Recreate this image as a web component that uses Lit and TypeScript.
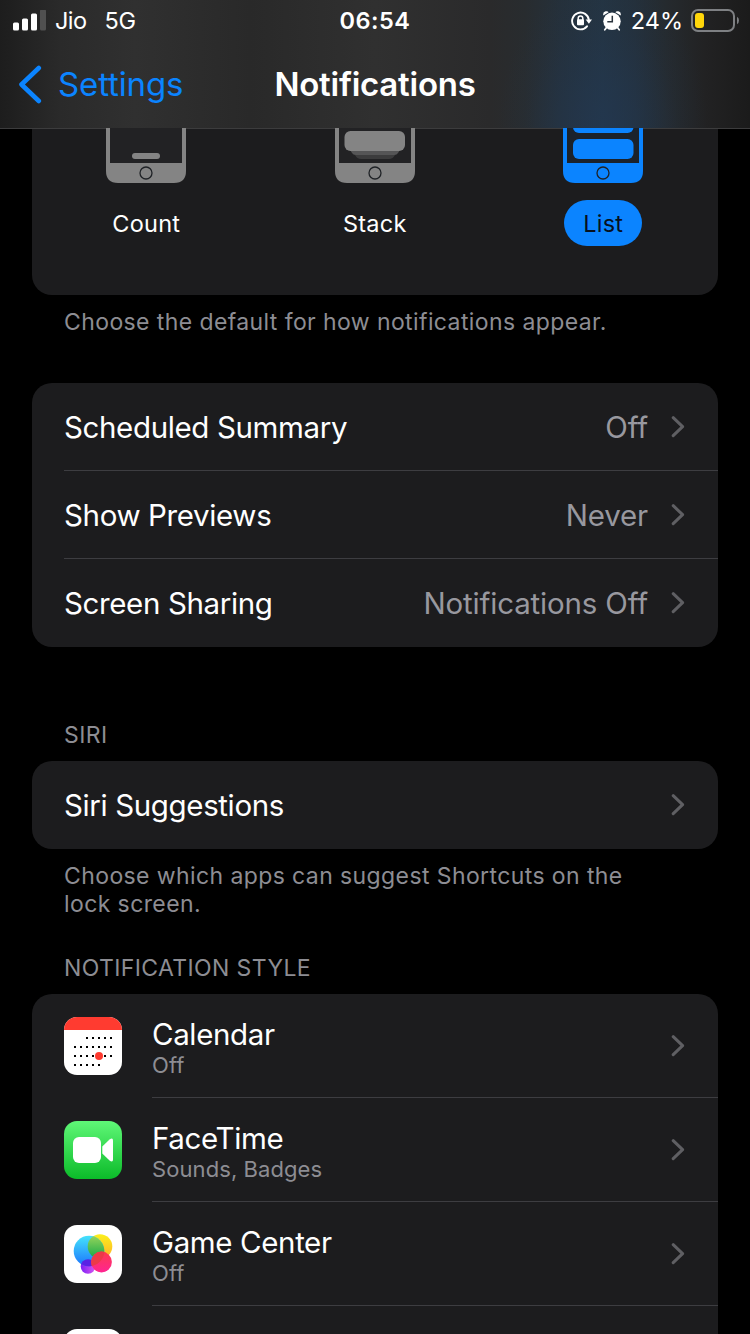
import { LitElement, html, css, svg, nothing } from "lit";
import { customElement, property } from "lit/decorators.js";

const chevron = html`<svg class="chev" width="14" height="22" viewBox="0 0 14 22">
  <path d="M2.200 1.700 L11.600 10.700 L2.200 19.700" fill="none" stroke="#5f5f63" stroke-width="3" stroke-linecap="round" stroke-linejoin="round" />
</svg>`;

const phoneContent = {
  count: svg`<rect x="26" y="25" width="28" height="6" rx="3" fill="#848484"/>`,
  stack: svg`
    <path d="M14 20H66L60 27Q58 31 54 31H26Q22 31 20 27Z" fill="#3c3c3d"/>
    <path d="M10 14H70L63 25Q62 27 59 27H21Q18 27 17 25Z" fill="#555556"/>
    <rect x="9.500" y="3" width="60.500" height="20" rx="6" fill="#848484"/>`,
  list: svg`
    <rect x="10" y="-15" width="60.500" height="20" rx="6" fill="#0b84ff"/>
    <rect x="10" y="11" width="60.500" height="20" rx="6" fill="#0b84ff"/>`,
};

type Kind = keyof typeof phoneContent;

@customElement("phone-option")
class PhoneOption extends LitElement {
  @property() kind: Kind = "count";
  @property() label = "";
  @property({ type: Boolean }) selected = false;

  static styles = css`
    :host { display: flex; flex-direction: column; align-items: center; width: 228.5px; flex: none; }
    svg { display: block; margin-top: -1px; }
    .label {
      margin-top: 17px; height: 46px; line-height: 47px; padding: 0 19px; border-radius: 23px;
      font-size: 23.5px; letter-spacing: 0.25px; color: #fff;
    }
    .on { background: #0b84ff; color: #06111e; }
  `;

  render() {
    const body = this.selected ? "#0b84ff" : "#848484";
    const screen = this.selected ? "#1b222b" : "#222224";
    return html`
      <svg width="80" height="55" viewBox="0 0 80 55">
        <path d="M0 0H80V43Q80 55 68 55H12Q0 55 0 43Z" fill=${body} />
        <rect x="4" y="0" width="72" height="35" fill=${screen} />
        ${phoneContent[this.kind]}
        <circle cx="40" cy="45" r="6" fill="none" stroke="#1f2226" stroke-width="1.300" />
      </svg>
      <div class="label ${this.selected ? "on" : ""}">${this.label}</div>
    `;
  }
}

const dots: [number, number][] = [];
[[2, 6], [0, 6], [0, 6], [0, 4]].forEach(([from, to], row) => {
  for (let c = from; c <= to; c++) dots.push([10 + c * 6, 20 + row * 9]);
});

const calendarIcon = html`<svg width="58" height="58" viewBox="0 0 58 58">
  <defs><clipPath id="c"><rect width="58" height="58" rx="13" /></clipPath></defs>
  <g clip-path="url(#c)">
    <rect width="58" height="58" fill="#fff" />
    <rect width="58" height="13" fill="#ff3b30" />
  </g>
  ${dots.map(([x, y]) => svg`<rect x=${x} y=${y} width="2" height="2" fill="#000"/>`)}
  <circle cx="35" cy="39" r="4" fill="#ff3b30" />
</svg>`;

const facetimeIcon = html`<svg width="58" height="58" viewBox="0 0 58 58">
  <defs><linearGradient id="f" x1="0" y1="0" x2="0" y2="1">
    <stop offset="0" stop-color="#5ff777" /><stop offset="1" stop-color="#0bbb29" />
  </linearGradient></defs>
  <rect width="58" height="58" rx="13" fill="url(#f)" />
  <rect x="9" y="16" width="28" height="26" rx="6" fill="#fff" />
  <path d="M38.300 25.500 L45.500 18.500Q49 16 49 19.500V38.500Q49 42 45.500 39.500L38.300 32.500Z" fill="#fff" />
</svg>`;

const gameIcon = html`<svg width="58" height="58" viewBox="0 0 58 58">
  <defs>
    <linearGradient id="b" x1="0" y1="0" x2="0" y2="1"><stop offset="0" stop-color="#45e3fb" /><stop offset="1" stop-color="#1b74fd" /></linearGradient>
    <linearGradient id="y" x1="0" y1="0" x2="0" y2="1"><stop offset="0" stop-color="#fbf01c" /><stop offset="1" stop-color="#ffb02a" /></linearGradient>
    <linearGradient id="r" x1="0" y1="0" x2="0" y2="1"><stop offset="0" stop-color="#fd3c4c" /><stop offset="1" stop-color="#ff2492" /></linearGradient>
    <linearGradient id="p" x1="0" y1="0" x2="1" y2="0"><stop offset="0" stop-color="#7a1ff5" /><stop offset="1" stop-color="#d957f0" /></linearGradient>
    <linearGradient id="g" x1="0" y1="0" x2="0" y2="1"><stop offset="0" stop-color="#9fd75c" /><stop offset="1" stop-color="#12a848" /></linearGradient>
    <clipPath id="k"><circle cx="25" cy="26" r="15.300" /></clipPath>
  </defs>
  <rect width="58" height="58" rx="13" fill="#fff" />
  <circle cx="24" cy="41.500" r="7.300" fill="url(#p)" />
  <circle cx="36" cy="21.500" r="12.300" fill="url(#y)" />
  <circle cx="25" cy="26" r="15.300" fill="url(#b)" />
  <g clip-path="url(#k)">
    <circle cx="36" cy="21.500" r="12.300" fill="url(#g)" />
    <circle cx="24" cy="41.500" r="7.300" fill="#5a22e4" />
  </g>
  <circle cx="37.500" cy="37" r="10.400" fill="url(#r)" />
  <g clip-path="url(#k)"><circle cx="37.500" cy="37" r="10.400" fill="#ec3a48" /></g>
</svg>`;

const blankIcon = html`<svg width="58" height="58" viewBox="0 0 58 58"><rect width="58" height="58" rx="13" fill="#fff" /></svg>`;

const apps = [
  { name: "Calendar", detail: "Off", icon: calendarIcon },
  { name: "FaceTime", detail: "Sounds, Badges", icon: facetimeIcon },
  { name: "Game Center", detail: "Off", icon: gameIcon },
  { name: "", detail: "", icon: blankIcon },
];

const general = [
  { name: "Scheduled Summary", value: "Off" },
  { name: "Show Previews", value: "Never" },
  { name: "Screen Sharing", value: "Notifications Off" },
];

@customElement("app-root")
class AppRoot extends LitElement {
  static styles = css`
    :host {
      display: block; width: 750px; height: 1334px; overflow: hidden; background: #000; color: #fff;
      font-family: Inter, "Liberation Sans", sans-serif; font-feature-settings: "calt" 0;
    }
    * { box-sizing: border-box; }
    svg { display: block; flex: none; }
    header {
      height: 129px; border-bottom: 1px solid #3c3c3d;
      background:
        radial-gradient(ellipse 105px 150px at 603px 128px, rgba(34, 57, 86, 0.6) 0%, rgba(34, 57, 86, 0.42) 30%, rgba(34, 57, 86, 0.1) 72%, rgba(34, 57, 86, 0) 100%),
        linear-gradient(90deg, #1d1d1d 0, #2a2a2a 60px, #303030 135px, #292929 250px, #303030 375px, #2a2a2b 490px, #282c2f 525px, #25303a 560px, #243442 603px, #24303b 635px, #252a2e 667px, #222223 705px, #1b1b1b 750px);
    }
    .status { height: 41px; display: grid; grid-template-columns: 1fr auto 1fr; align-items: center; font-size: 23.5px; line-height: 41px; }
    .left { display: flex; align-items: center; padding-left: 13px; }
    .carrier { margin-left: 9px; letter-spacing: -0.6px; }
    .net { margin-left: 18px; letter-spacing: -0.2px; }
    .time { font-weight: 600; letter-spacing: 0.5px; }
    .right { display: flex; align-items: center; justify-content: flex-end; padding-right: 11px; }
    .alarm { margin-left: 11px; }
    .pct { margin-left: 10px; margin-right: -1px; }
    .batt { margin-left: 9px; }
    .nav { height: 87px; display: grid; grid-template-columns: 1fr auto 1fr; align-items: center; line-height: 87px; }
    .back { display: flex; align-items: center; padding-left: 18px; color: #0b84ff; font-size: 33px; letter-spacing: -0.12px; }
    .back span { margin-left: 16px; }
    .title { font-weight: 600; font-size: 33px; letter-spacing: -0.24px; }
    main { padding: 0 32px; }
    .card { background: #1c1c1e; border-radius: 20px; }
    .display { height: 166px; border-radius: 0 0 20px 20px; display: flex; }
    .note { padding: 13px 60px 0 32px; font-size: 23px; line-height: 28px; color: #8d8d93; letter-spacing: 0.4px; }
    .note.one { height: 88px; }
    .note.two { height: 105px; }
    .head { height: 40px; line-height: 28px; padding-left: 32px; font-size: 23px; color: #8d8d93; letter-spacing: 0.38px; }
    .gap { padding-top: 74px; height: 114px; }
    .row { height: 88px; margin-left: 32px; padding-right: 33px; display: flex; align-items: center; border-bottom: 1px solid #3d3d41; font-size: 29.5px; }
    .row:last-child { border-bottom: 0; }
    .name { flex: 1; letter-spacing: -0.37px; }
    .value { color: #98989f; margin-right: 23px; letter-spacing: -0.18px; }
    .app { height: 104px; margin-left: 32px; display: flex; }
    .app > svg { margin-top: 23px; }
    .body { flex: 1; margin-left: 30px; padding-right: 33px; border-bottom: 1px solid #3d3d41; display: flex; align-items: center; }
    .texts { flex: 1; height: 104px; padding-top: 20px; }
    .app-name { font-size: 29.5px; line-height: 40px; height: 37px; letter-spacing: -0.37px; }
    .detail { font-size: 22px; line-height: 28px; color: #8d8d93; letter-spacing: 0.08px; }
  `;

  render() {
    return html`
      <header>
        <div class="status">
          <div class="left">
            <svg width="33" height="22" viewBox="0 0 33 22">
              <rect x="0" y="12.500" width="6" height="8" rx="1.500" fill="#fff" />
              <rect x="9" y="8.500" width="6" height="12" rx="1.500" fill="#fff" />
              <rect x="18" y="3.500" width="6" height="17" rx="1.500" fill="#fff" />
              <rect x="27" y="-0.500" width="6" height="21" rx="1.500" fill="#505050" />
            </svg>
            <span class="carrier">Jio</span><span class="net">5G</span>
          </div>
          <span class="time">06:54</span>
          <div class="right">
            <svg width="21" height="20" viewBox="0 0 21 20">
              <path d="M16 15.300A8.400 8.400 0 1 1 17.900 9.300" fill="none" stroke="#fff" stroke-width="1.900" stroke-linecap="round" />
              <path d="M14.700 8.600H21L17.900 12.800Z" fill="#fff" />
              <path d="M7.200 9V7.300a2.300 2.300 0 0 1 4.600 0V9" fill="none" stroke="#fff" stroke-width="1.500" />
              <rect x="6" y="8.300" width="7" height="6" rx="1" fill="#fff" />
            </svg>
            <svg class="alarm" width="18" height="20" viewBox="0 0 18 20">
              <circle cx="9" cy="10.300" r="8.700" fill="#fff" />
              <path d="M0.300 4.600Q-0.500 1.200 2.600 0.300Q4.800 -0.200 5.600 1.200ZM17.700 4.600Q18.500 1.200 15.400 0.300Q13.200 -0.200 12.400 1.200Z" fill="#fff" />
              <path d="M3.500 16.500L1.800 18.700M14.500 16.500L16.200 18.700" stroke="#fff" stroke-width="1.800" stroke-linecap="round" />
              <path d="M9.300 4.800V10.800H4.300" fill="none" stroke="#2a343d" stroke-width="1.500" />
            </svg>
            <span class="pct">24%</span>
            <svg class="batt" width="48" height="23" viewBox="0 0 48 23">
              <rect x="1" y="1" width="42" height="21" rx="6" fill="none" stroke="#7e8083" stroke-width="2" />
              <rect x="4" y="4" width="9" height="15" rx="3" fill="#ffd60a" />
              <path d="M46 7.800Q48 9 48 11.500T46 15.200Z" fill="#7e8083" />
            </svg>
          </div>
        </div>
        <div class="nav">
          <div class="back">
            <svg width="24" height="40" viewBox="0 0 24 40"><path d="M20.800 3L3.500 19.500L20.800 36" fill="none" stroke="#0b84ff" stroke-width="4.600" stroke-linecap="round" stroke-linejoin="round" /></svg>
            <span>Settings</span>
          </div>
          <span class="title">Notifications</span>
        </div>
      </header>
      <main>
        <div class="card display">
          <phone-option kind="count" label="Count"></phone-option>
          <phone-option kind="stack" label="Stack"></phone-option>
          <phone-option kind="list" label="List" selected></phone-option>
        </div>
        <div class="note one">Choose the default for how notifications appear.</div>
        <div class="card">
          ${general.map((r) => html`<div class="row"><span class="name">${r.name}</span><span class="value">${r.value}</span>${chevron}</div>`)}
        </div>
        <div class="head gap">SIRI</div>
        <div class="card">
          <div class="row"><span class="name">Siri Suggestions</span>${chevron}</div>
        </div>
        <div class="note two">Choose which apps can suggest Shortcuts on the lock screen.</div>
        <div class="head">NOTIFICATION STYLE</div>
        <div class="card">
          ${apps.map((a) => html`<div class="app">${a.icon}
            <div class="body">
              <div class="texts"><div class="app-name">${a.name}</div><div class="detail">${a.detail}</div></div>
              ${a.name ? chevron : nothing}
            </div>
          </div>`)}
        </div>
      </main>
    `;
  }
}
